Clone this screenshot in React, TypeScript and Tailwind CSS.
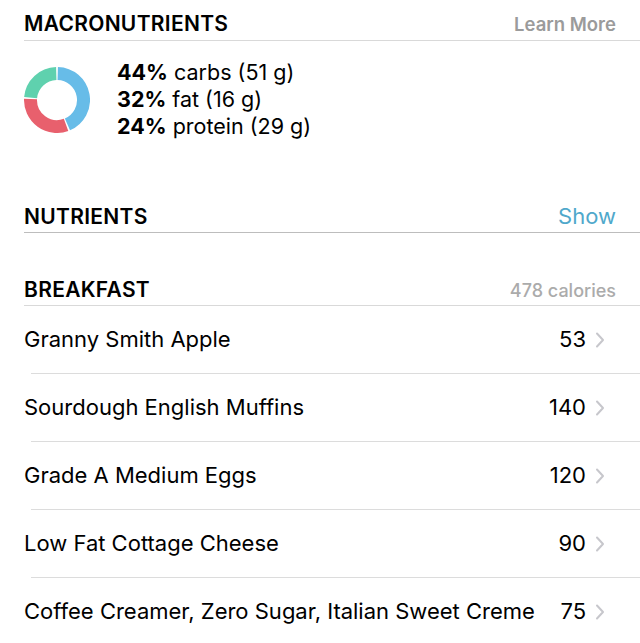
const macros = [
  { pct: 44, label: "carbs", grams: 51, color: "#67bce8" },
  { pct: 32, label: "fat", grams: 16, color: "#e8606d" },
  { pct: 24, label: "protein", grams: 29, color: "#5fd1ae" },
];

const foods = [
  { name: "Granny Smith Apple", cal: 53 },
  { name: "Sourdough English Muffins", cal: 140 },
  { name: "Grade A Medium Eggs", cal: 120 },
  { name: "Low Fat Cottage Cheese", cal: 90 },
  { name: "Coffee Creamer, Zero Sugar, Italian Sweet Creme", cal: 75 },
];

function arc(cx: number, cy: number, r: number, a0: number, a1: number) {
  const p = (a: number) => {
    const rad = ((a - 90) * Math.PI) / 180;
    return `${cx + r * Math.cos(rad)} ${cy + r * Math.sin(rad)}`;
  };
  const large = a1 - a0 > 180 ? 1 : 0;
  return `M ${p(a0)} A ${r} ${r} 0 ${large} 1 ${p(a1)}`;
}

function Donut() {
  let start = 0;
  const gap = 1.6;
  return (
    <svg width="66" height="66" viewBox="0 0 66 66" className="shrink-0">
      {macros.map((m) => {
        const sweep = (m.pct / 100) * 360;
        const d = arc(33, 33, 26.5, start + gap, start + sweep - gap);
        start += sweep;
        return <path key={m.label} d={d} fill="none" stroke={m.color} strokeWidth={13} />;
      })}
    </svg>
  );
}

function Chevron() {
  return (
    <svg width="10" height="16" viewBox="0 0 10 16" fill="none" className="shrink-0">
      <path d="M2 1.5 L8 8 L2 14.5" stroke="#c7c7cc" strokeWidth={2} strokeLinecap="round" strokeLinejoin="round" />
    </svg>
  );
}

export default function App() {
  return (
    <div className="w-[640px] h-[643px] overflow-hidden bg-white pl-6 text-black font-['Inter',sans-serif]">
      {/* macronutrients */}
      <div className="flex items-baseline justify-between pr-6 pt-[12px] pb-[4px] border-b border-[#d9d9d9]">
        <span className="text-[21px] leading-[24px] font-semibold tracking-[0.3px]">MACRONUTRIENTS</span>
        <span className="text-[18.5px] leading-[24px] font-semibold text-[#9b9b9b]">Learn More</span>
      </div>
      <div className="flex items-center gap-[27px] pt-[18px]">
        <Donut />
        <div className="flex flex-col">
          {macros.map((m) => (
            <div key={m.label} className="text-[21.5px] leading-[27px]">
              <span className="font-bold">{m.pct}%</span> {m.label} ({m.grams} g)
            </div>
          ))}
        </div>
      </div>

      {/* nutrients */}
      <div className="flex items-baseline justify-between pr-6 mt-[64px] pb-[3px] border-b border-[#bdbdbd]">
        <span className="text-[21px] leading-[24px] font-semibold tracking-[0.3px]">NUTRIENTS</span>
        <span className="text-[22px] leading-[24px] text-[#4fa8cb]">Show</span>
      </div>

      {/* breakfast */}
      <div className="flex items-baseline justify-between pr-6 mt-[45px] pb-[2px] border-b border-[#d9d9d9]">
        <span className="text-[21px] leading-[24px] font-semibold tracking-[0.3px]">BREAKFAST</span>
        <span className="text-[18px] leading-[24px] font-medium text-[#ababab]">478 calories</span>
      </div>

      <div className="flex flex-col">
        {foods.map((f, i) => (
          <div key={f.name} className="flex flex-col">
            <div className="flex h-[67px] items-center justify-between pr-[35px]">
              <span className="text-[22px]">{f.name}</span>
              <div className="flex items-center gap-[9px]">
                <span className="text-[22px]">{f.cal}</span>
                <Chevron />
              </div>
            </div>
            {i < foods.length - 1 && <div className="ml-[7px] h-px bg-[#dcdcdc]" />}
          </div>
        ))}
      </div>
    </div>
  );
}
